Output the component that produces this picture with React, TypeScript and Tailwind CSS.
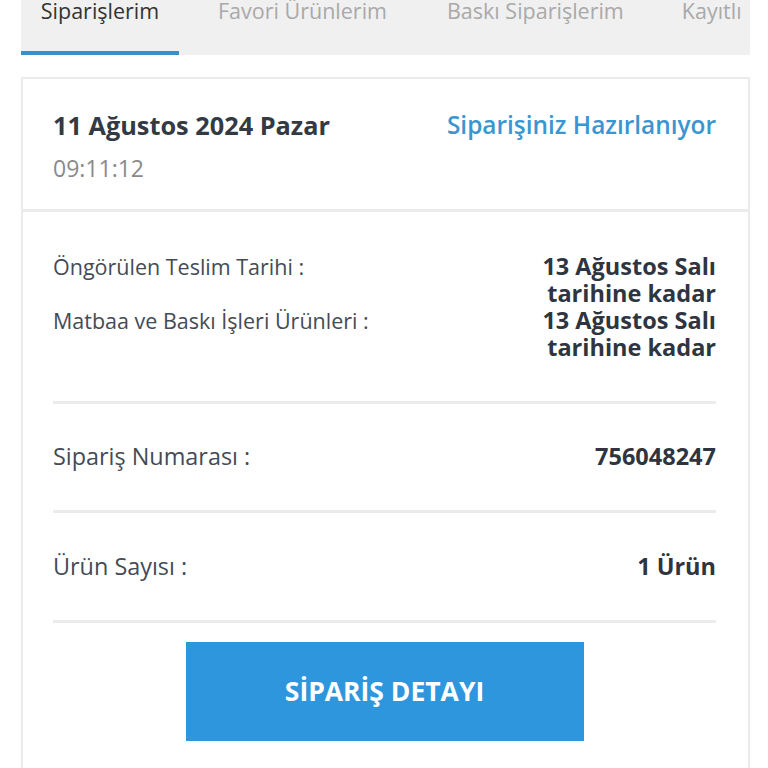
const TABS = ["Siparişlerim", "Favori Ürünlerim", "Baskı Siparişlerim", "Kayıtlı"];
const TAB_CLASS = [
  "w-[158px] justify-center text-[#333] border-b-4 border-[#3a8fc8]",
  "ml-[39px] text-[#a9a9a9]",
  "ml-[60px] text-[#a9a9a9]",
  "ml-[58px] text-[#a9a9a9]",
];

function Row({ label, value, small }: { label: string; value: string[]; small?: boolean }) {
  return (
    <div className="flex justify-between items-start">
      <span className={`text-[#444b55] ${small ? "text-[21.5px]" : "text-[23.4px]"}`}>{label}</span>
      <span className="font-bold text-[#2f3540] text-right text-[23.5px]">
        {value.map(v => <div key={v}>{v}</div>)}
      </span>
    </div>
  );
}

export default function App() {
  return (
    <div className="w-[768px] h-[768px] overflow-hidden bg-white" style={{ fontFamily: '"Open Sans", sans-serif' }}>
      {/* Tabs */}
      <div className="ml-[21px] w-[729px] h-[55px] bg-[#f0f0f0] flex overflow-hidden">
        {TABS.map((t, i) => (
          <div key={t}
            className={`shrink-0 h-full flex items-start text-[21.5px] leading-[24px] whitespace-nowrap ${TAB_CLASS[i]}`}>
            <span className="-mt-[1px]">{t}</span>
          </div>
        ))}
      </div>

      {/* Card */}
      <div className="ml-[21px] mt-[22px] w-[729px] border-2 border-[#ebebeb] border-b-0">
        <div className="flex justify-between pl-[30px] pr-[32px] pt-[30px] pb-[26px] border-b-[3px] border-[#ebebeb]">
          <div>
            <div className="text-[25.3px] font-bold text-[#333a44] leading-[32px]">11 Ağustos 2024 Pazar</div>
            <div className="text-[23px] text-[#8a8a8a] leading-[30px] mt-[12px]">09:11:12</div>
          </div>
          <div className="text-[24.4px] font-semibold text-[#3a96d0] leading-[32px]">Siparişiniz Hazırlanıyor</div>
        </div>

        <div className="pl-[30px] pr-[32px] leading-[27px]">
          <div className="pt-[41px] pb-[40px] border-b-[3px] border-[#ebebeb]">
            <Row small label="Öngörülen Teslim Tarihi :" value={["13 Ağustos Salı", "tarihine kadar"]} />
            <Row small label="Matbaa ve Baskı İşleri Ürünleri :" value={["13 Ağustos Salı", "tarihine kadar"]} />
          </div>
          <div className="pt-[39px] pb-[40px] border-b-[3px] border-[#ebebeb]">
            <Row label="Sipariş Numarası :" value={["756048247"]} />
          </div>
          <div className="pt-[40px] pb-[40px] border-b-[3px] border-[#ebebeb]">
            <Row label="Ürün Sayısı :" value={["1 Ürün"]} />
          </div>
          <div className="flex justify-center pt-[19px] pb-[30px]">
            <button className="w-[398px] h-[99px] bg-[#2d96dc] text-white font-bold text-[26.5px]">SİPARİŞ DETAYI</button>
          </div>
        </div>
      </div>
    </div>
  );
}
